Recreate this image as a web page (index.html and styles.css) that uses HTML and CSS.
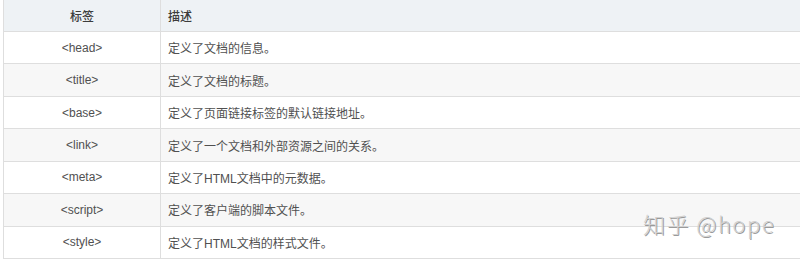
FILE: index.html
```html
<!DOCTYPE html>
<html lang="zh">
<head>
<meta charset="utf-8">
<link rel="stylesheet" href="styles.css">
</head>
<body>
<div class="wrap">
  <table class="tags">
    <thead>
      <tr><th class="c1">标签</th><th class="c2">描述</th></tr>
    </thead>
    <tbody>
      <tr><td class="c1">&lt;head&gt;</td><td class="c2">定义了文档的信息。</td></tr>
      <tr><td class="c1">&lt;title&gt;</td><td class="c2">定义了文档的标题。</td></tr>
      <tr><td class="c1">&lt;base&gt;</td><td class="c2">定义了页面链接标签的默认链接地址。</td></tr>
      <tr><td class="c1">&lt;link&gt;</td><td class="c2">定义了一个文档和外部资源之间的关系。</td></tr>
      <tr><td class="c1">&lt;meta&gt;</td><td class="c2">定义了HTML文档中的元数据。</td></tr>
      <tr><td class="c1">&lt;script&gt;</td><td class="c2">定义了客户端的脚本文件。</td></tr>
      <tr><td class="c1">&lt;style&gt;</td><td class="c2">定义了HTML文档的样式文件。</td></tr>
    </tbody>
  </table>
  <div class="watermark">知乎 @hope</div>
</div>
</body>
</html>
```
FILE: styles.css
```css
html, body {
  margin: 0;
  padding: 0;
  background: #ffffff;
  overflow: hidden;
}
.wrap {
  position: relative;
  width: 800px;
  height: 259px;
  overflow: hidden;
  padding-left: 3px;
  box-sizing: border-box;
}
.tags {
  border-collapse: collapse;
  width: 820px;
  font-family: "Liberation Sans", "Noto Sans CJK SC", sans-serif;
  font-size: 12px;
  color: #505050;
}
.tags th, .tags td {
  border: 1px solid #dedede;
  padding: 0 7px;
  height: 32.45px;
  box-sizing: border-box;
  font-weight: normal;
}
.tags thead tr {
  background: #eef2f5;
}
.tags th {
  border-top: none;
  color: #3c3c3c;
  height: 31.5px;
  font-weight: 500;
}
.tags tbody tr:nth-child(even) {
  background: #f7f7f7;
}
.c1 {
  width: 157px;
  text-align: center;
}
.c2 {
  text-align: left;
}
.watermark {
  position: absolute;
  left: 643px;
  top: 207px;
  font-family: "Noto Sans CJK SC", "Liberation Sans", sans-serif;
  font-size: 22px;
  font-weight: 300;
  color: #d2d2d2;
  letter-spacing: 1.5px;
  text-shadow: 1px 1px 0 #9a9a9a;
  white-space: nowrap;
}
```
